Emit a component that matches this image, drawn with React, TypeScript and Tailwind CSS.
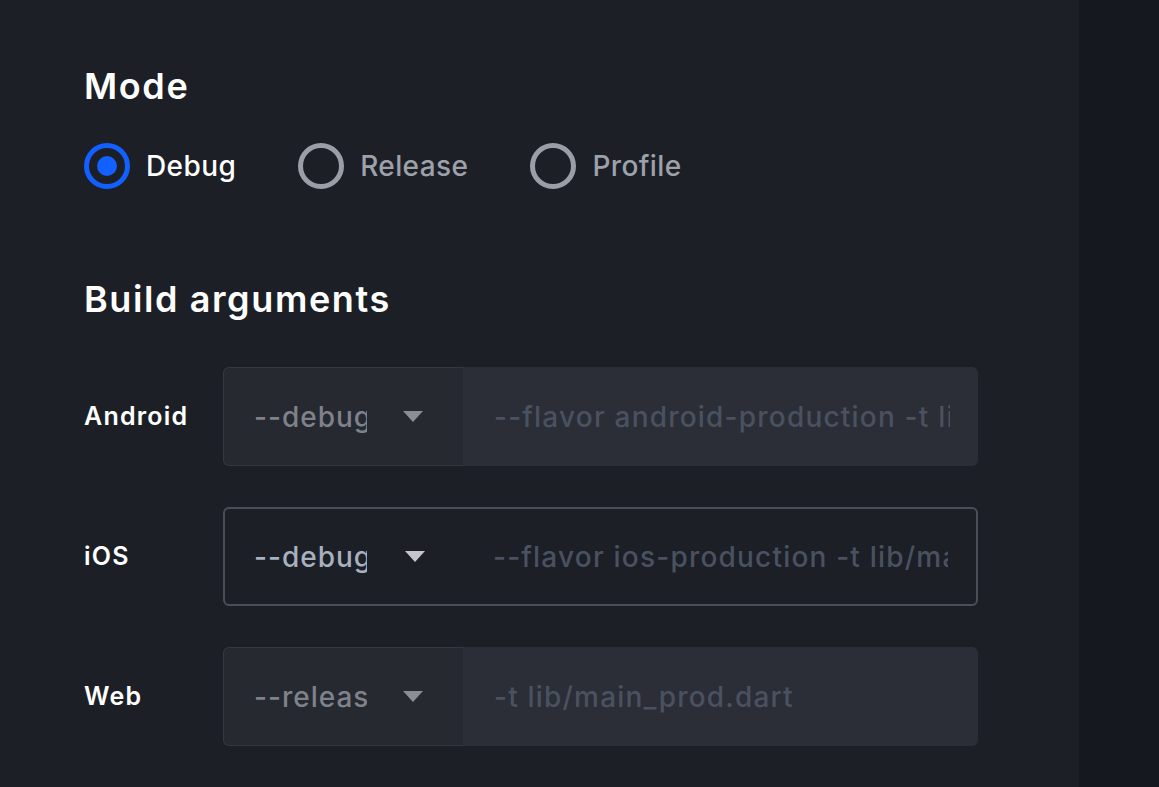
import { useState } from "react";

const font = { fontFamily: "Inter, 'Noto Sans', sans-serif" };

type Row = {
  label: string;
  mode: string;
  args: string;
  focused?: boolean;
};

const rows: Row[] = [
  { label: "Android", mode: "--debug", args: "--flavor android-production -t lib/main_prod.dart" },
  { label: "iOS", mode: "--debug", args: "--flavor ios-production -t lib/main_prod.dart", focused: true },
  { label: "Web", mode: "--release", args: "-t lib/main_prod.dart" },
];

const Caret = ({ light }: { light?: boolean }) => (
  <svg width="20" height="11" viewBox="0 0 20 11" className="shrink-0">
    <path d="M0 0 H20 L10 11 Z" fill={light ? "#c4c6cb" : "#8b8e95"} />
  </svg>
);

const Radio = ({ label, checked, onClick }: { label: string; checked: boolean; onClick: () => void }) => (
  <button onClick={onClick} className="flex items-center gap-[16px]">
    <span
      className={`flex items-center justify-center w-[46px] h-[46px] rounded-full border-[5px] ${
        checked ? "border-[#1160ff]" : "border-[#9a9ea7]"
      }`}
    >
      {checked && <span className="w-[20px] h-[20px] rounded-full bg-[#1160ff]" />}
    </span>
    <span className={`text-[28px] font-medium tracking-[0.4px] ${checked ? "text-white" : "text-[#9da1a9]"}`}>
      {label}
    </span>
  </button>
);

const ArgRow = ({ row }: { row: Row }) => {
  if (row.focused) {
    return (
      <div className="flex items-center">
        <div className="w-[139px] text-[25px] font-semibold tracking-[1.2px] text-white">{row.label}</div>
        <div className="flex w-[755px] h-[99px] rounded-[6px] border-2 border-[#4a4e57]">
          <div className="flex items-center w-[238px] pl-[29px] pr-[38px]">
            <span className="w-[113px] overflow-hidden whitespace-nowrap text-[28px] font-medium tracking-[1px] text-[#a7b1bf]">
              {row.mode}
            </span>
            <span className="ml-auto">
              <Caret light />
            </span>
          </div>
          <input
            readOnly
            placeholder={row.args}
            className="flex-1 min-w-0 bg-transparent pl-[30px] pr-[28px] text-[28px] font-medium tracking-[1.2px] outline-none placeholder:text-[#4a5160]"
            style={font}
          />
        </div>
      </div>
    );
  }
  return (
    <div className="flex items-center">
      <div className="w-[139px] text-[25px] font-semibold tracking-[1.2px] text-white">{row.label}</div>
      <div className="flex w-[755px] h-[99px]">
        <div className="flex items-center w-[240px] pl-[30px] pr-[40px] rounded-l-[6px] border border-r-0 border-[#353841] bg-[#262930]">
          <span className="w-[113px] overflow-hidden whitespace-nowrap text-[28px] font-medium tracking-[1px] text-[#7e828b]">
            {row.mode}
          </span>
          <span className="ml-auto">
            <Caret />
          </span>
        </div>
        <input
          readOnly
          placeholder={row.args}
          className="flex-1 min-w-0 rounded-r-[6px] bg-[#2b2e36] pl-[31px] pr-[28px] text-[28px] font-medium tracking-[1.2px] outline-none placeholder:text-[#4a5160]"
          style={font}
        />
      </div>
    </div>
  );
};

export default function App() {
  const [mode, setMode] = useState("Debug");

  return (
    <div className="flex h-screen w-full overflow-hidden" style={font}>
      <main className="flex-1 bg-[#1c1f26] pl-[84px] pt-[66px]">
        <h2 className="text-[36px] leading-[40px] font-semibold tracking-[1.6px] text-white">Mode</h2>
        <div className="flex items-center gap-[62px] mt-[37px]">
          {["Debug", "Release", "Profile"].map((m) => (
            <Radio key={m} label={m} checked={mode === m} onClick={() => setMode(m)} />
          ))}
        </div>

        <h2 className="mt-[90px] text-[36px] leading-[40px] font-semibold tracking-[1.6px] text-white">
          Build arguments
        </h2>
        <div className="flex flex-col gap-[41px] mt-[48px]">
          {rows.map((r) => (
            <ArgRow key={r.label} row={r} />
          ))}
        </div>
      </main>
      <aside className="w-[80px] bg-[#15181f]" />
    </div>
  );
}
